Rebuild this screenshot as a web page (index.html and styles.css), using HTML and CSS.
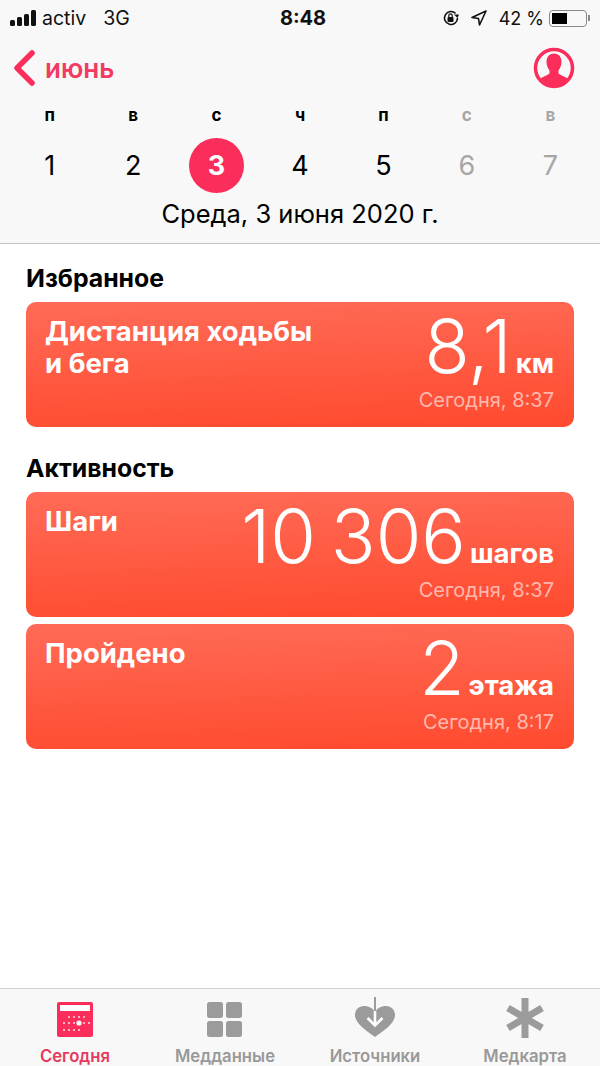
FILE: index.html

```html
<!DOCTYPE html>
<html lang="ru">
<head>
  <meta charset="UTF-8">
  <meta name="viewport" content="width=device-width, initial-scale=1.0">
  <title>Здоровье</title>
  <link rel="stylesheet" href="styles.css">
</head>
<body>
  <div class="app">
    <header class="top">
      <div class="status">
        <div class="status-left">
          <svg class="signal" width="26" height="16" viewBox="0 0 26 16">
            <rect x="0" y="10" width="5" height="6" rx="1.5"/>
            <rect x="7" y="7" width="5" height="9" rx="1.5"/>
            <rect x="14" y="4" width="5" height="12" rx="1.5"/>
            <rect x="21" y="0" width="5" height="16" rx="1.5"/>
          </svg>
          <span class="carrier">activ</span>
          <span class="network">3G</span>
        </div>
        <div class="status-time">8:48</div>
        <div class="status-right">
          <svg width="18" height="18" viewBox="0 0 18 18">
            <path d="M15.5 9a6.5 6.5 0 1 1-2-4.7" fill="none" stroke="#111" stroke-width="1.6"/>
            <path d="M12 5.5h5L15.500 9z" fill="#111"/>
            <rect x="5.500" y="8" width="6" height="5" rx="1" fill="#111"/>
            <path d="M6.800 8V6.500a1.700 1.700 0 0 1 3.400 0V8" fill="none" stroke="#111" stroke-width="1.200"/>
          </svg>
          <svg class="location" width="16" height="16" viewBox="0 0 16 16">
            <path d="M15 1 1 7.500l6.500 1 1 6.500z" fill="none" stroke="#111" stroke-width="1.600" stroke-linejoin="round"/>
          </svg>
          <span class="percent">42 %</span>
          <div class="battery"><div class="battery-fill"></div></div>
          <div class="battery-tip"></div>
        </div>
      </div>

      <div class="nav">
        <div class="back">
          <svg width="24" height="36" viewBox="0 0 24 36">
            <path d="M19 3 4 18l15 15" fill="none" stroke="#fb2d5a" stroke-width="5.500" stroke-linecap="round" stroke-linejoin="round"/>
          </svg>
          <span>июнь</span>
        </div>
        <svg class="profile" width="42" height="42" viewBox="0 0 42 42">
          <circle cx="21" cy="21" r="18.500" fill="none" stroke="#fb2d5a" stroke-width="3.500"/>
          <path d="M21 6.500c5 0 7.500 3.700 7.500 8.500 0 3.500-1.500 6.500-3 8.500v3c2 2 6.500 3 9.500 5.500a17 17 0 0 1-28 0c3-2.500 7.500-3.500 9.500-5.500v-3c-1.500-2-3-5-3-8.500 0-4.800 2.500-8.500 7.500-8.500z" fill="#fb2d5a"/>
        </svg>
      </div>

      <div class="week">
        <span class="wd">п</span>
        <span class="wd">в</span>
        <span class="wd">с</span>
        <span class="wd">ч</span>
        <span class="wd">п</span>
        <span class="wd off">с</span>
        <span class="wd off">в</span>
      </div>
      <div class="days">
        <span class="day">1</span>
        <span class="day">2</span>
        <span class="day"><b class="today">3</b></span>
        <span class="day">4</span>
        <span class="day">5</span>
        <span class="day off">6</span>
        <span class="day off">7</span>
      </div>
      <div class="date">Среда, 3 июня 2020 г.</div>
    </header>

    <main class="content">
      <h2>Избранное</h2>
      <section class="card">
        <div class="card-title">Дистанция ходьбы<br>и бега</div>
        <div class="card-data">
          <div class="value">8,1<span class="unit">км</span></div>
          <div class="when">Сегодня, 8:37</div>
        </div>
      </section>

      <h2 class="second">Активность</h2>
      <section class="card">
        <div class="card-title">Шаги</div>
        <div class="card-data">
          <div class="value">10 306<span class="unit">шагов</span></div>
          <div class="when">Сегодня, 8:37</div>
        </div>
      </section>
      <section class="card next">
        <div class="card-title">Пройдено</div>
        <div class="card-data">
          <div class="value">2<span class="unit">этажа</span></div>
          <div class="when">Сегодня, 8:17</div>
        </div>
      </section>
    </main>

    <nav class="tabs">
      <div class="tab active">
        <svg width="36" height="44" viewBox="0 0 36 44">
          <rect x="0" y="5" width="36" height="35" rx="2" fill="#fb2d5a"/>
          <rect x="3" y="8" width="30" height="6" fill="#fff"/>
          <g fill="#fff" opacity=".85">
            <circle cx="12" cy="20" r="1"/><circle cx="17" cy="20" r="1"/><circle cx="22" cy="20" r="1"/><circle cx="27" cy="20" r="1"/>
            <circle cx="7" cy="26" r="1"/><circle cx="12" cy="26" r="1"/><circle cx="17" cy="26" r="1"/><circle cx="27" cy="26" r="1"/><circle cx="32" cy="26" r="1"/>
            <circle cx="7" cy="33" r="1"/><circle cx="12" cy="33" r="1"/><circle cx="17" cy="33" r="1"/><circle cx="22" cy="33" r="1"/>
          </g>
          <circle cx="22" cy="26" r="2.600" fill="#fff"/>
        </svg>
        <span>Сегодня</span>
      </div>
      <div class="tab">
        <svg width="36" height="44" viewBox="0 0 36 44" fill="#9b9b9b">
          <rect x="0" y="5" width="16" height="16" rx="2.500"/>
          <rect x="19" y="5" width="16" height="16" rx="2.500"/>
          <rect x="0" y="24" width="16" height="16" rx="2.500"/>
          <rect x="19" y="24" width="16" height="16" rx="2.500"/>
        </svg>
        <span>Медданные</span>
      </div>
      <div class="tab">
        <svg width="42" height="44" viewBox="0 0 42 44">
          <path d="M21 40C13 34 1 27 1 18 1 12.500 5 9 10 9c5 0 9 2.500 11 6 2-3.500 6-6 11-6 5 0 9 3.500 9 9 0 9-12 16-20 22z" fill="#9b9b9b"/>
          <path d="M21 14v14M13.500 21l7.500 7.500 7.500-7.500" fill="none" stroke="#fff" stroke-width="2.600"/>
          <path d="M21 0v14" fill="none" stroke="#9b9b9b" stroke-width="2"/>
        </svg>
        <span>Источники</span>
      </div>
      <div class="tab">
        <svg width="40" height="44" viewBox="0 0 40 44" fill="none" stroke="#9b9b9b" stroke-width="7">
          <path d="M20 1v40M3 11l34 20M37 11 3 31"/>
        </svg>
        <span>Медкарта</span>
      </div>
    </nav>
  </div>
</body>
</html>
```

FILE: styles.css

```css
* {
  box-sizing: border-box;
}
body {
  margin: 0;
  font-family: 'Inter', 'Roboto', sans-serif;
  background-color: #fff;
  color: #000;
}
.app {
  display: flex;
  flex-direction: column;
  height: 1066px;
  overflow: hidden;
}
.top {
  height: 244px;
  background-color: #f8f8f8;
  border-bottom: 1px solid #c4c4c4;
}

/* status bar */
.status {
  display: grid;
  grid-template-columns: 1fr auto 1fr;
  align-items: center;
  height: 36px;
  padding: 0 10px 0 10px;
  font-size: 19.5px;
  color: #111;
}
.status-left {
  display: flex;
  align-items: center;
}
.signal {
  fill: #111;
  margin-right: 6px;
}
.network {
  margin-left: 17px;
}
.status-time {
  margin-left: 6px;
  font-size: 20px;
  font-weight: 700;
}
.status-right {
  display: flex;
  align-items: center;
  justify-content: flex-end;
}
.location {
  margin-left: 11px;
}
.percent {
  margin-left: 12px;
  font-size: 18px;
}
.battery {
  width: 38px;
  height: 17px;
  margin-left: 5px;
  padding: 2px;
  border: 1px solid #888;
  border-radius: 4px;
}
.battery-fill {
  width: 15px;
  height: 100%;
  background-color: #000;
}
.battery-tip {
  width: 2px;
  height: 6px;
  margin-left: 1px;
  background-color: #888;
}

/* nav row */
.nav {
  display: flex;
  align-items: center;
  justify-content: space-between;
  height: 64px;
  padding: 0 25px 0 13px;
}
.back {
  display: flex;
  align-items: center;
  color: #f23a63;
  font-size: 26px;
  font-weight: 600;
}
.back span {
  margin-left: 8px;
}

/* week */
.week, .days {
  display: grid;
  grid-template-columns: repeat(7, 1fr);
  padding: 0 8px;
  text-align: center;
}
.week {
  height: 30px;
  align-items: center;
  font-size: 17px;
  font-weight: 700;
}
.days {
  height: 62px;
  margin-top: 4px;
  align-items: center;
  font-size: 27px;
}
.off {
  color: #a6a6a6;
}
.today {
  display: inline-flex;
  align-items: center;
  justify-content: center;
  width: 55px;
  height: 55px;
  border-radius: 50%;
  background-color: #fb2d5a;
  color: #fff;
  font-weight: 700;
}
.date {
  margin-top: 2px;
  font-size: 25.5px;
  text-align: center;
}

/* cards */
.content {
  flex: 1;
  padding: 20px 26px 0;
}
h2 {
  margin: 0 0 9px;
  font-size: 24.8px;
  line-height: 29px;
  font-weight: 700;
}
.second {
  margin-top: 27px;
}
.card {
  display: flex;
  justify-content: space-between;
  height: 125px;
  padding: 0 20px 15px 19px;
  border-radius: 10px;
  background-image: linear-gradient(178deg, #ff6b57, #ff4a2e);
  color: #fff;
}
.next {
  margin-top: 7px;
}
.card-title {
  padding-top: 13px;
  font-size: 27.5px;
  line-height: 32px;
  font-weight: 700;
}
.card-data {
  display: flex;
  flex-direction: column;
  justify-content: flex-end;
  align-items: flex-end;
}
.value {
  font-size: 74px;
  line-height: 82px;
  font-weight: 300;
  word-spacing: -6px;
  white-space: nowrap;
}
.unit {
  margin-left: 4px;
  font-size: 27.5px;
  line-height: 1;
  font-weight: 700;
}
.when {
  margin-top: 1px;
  font-size: 20px;
  line-height: 24px;
  color: rgba(255, 255, 255, 0.6);
}

/* tab bar */
.tabs {
  display: grid;
  grid-template-columns: repeat(4, 1fr);
  height: 78px;
  background-color: #f8f8f8;
  border-top: 1px solid #d0d0d0;
}
.tab {
  display: flex;
  flex-direction: column;
  align-items: center;
  padding-top: 8px;
  color: #999;
  font-size: 16.7px;
  font-weight: 600;
}
.tab span {
  margin-top: 6px;
  line-height: 18px;
}
.tab.active {
  color: #e63a60;
}
```
